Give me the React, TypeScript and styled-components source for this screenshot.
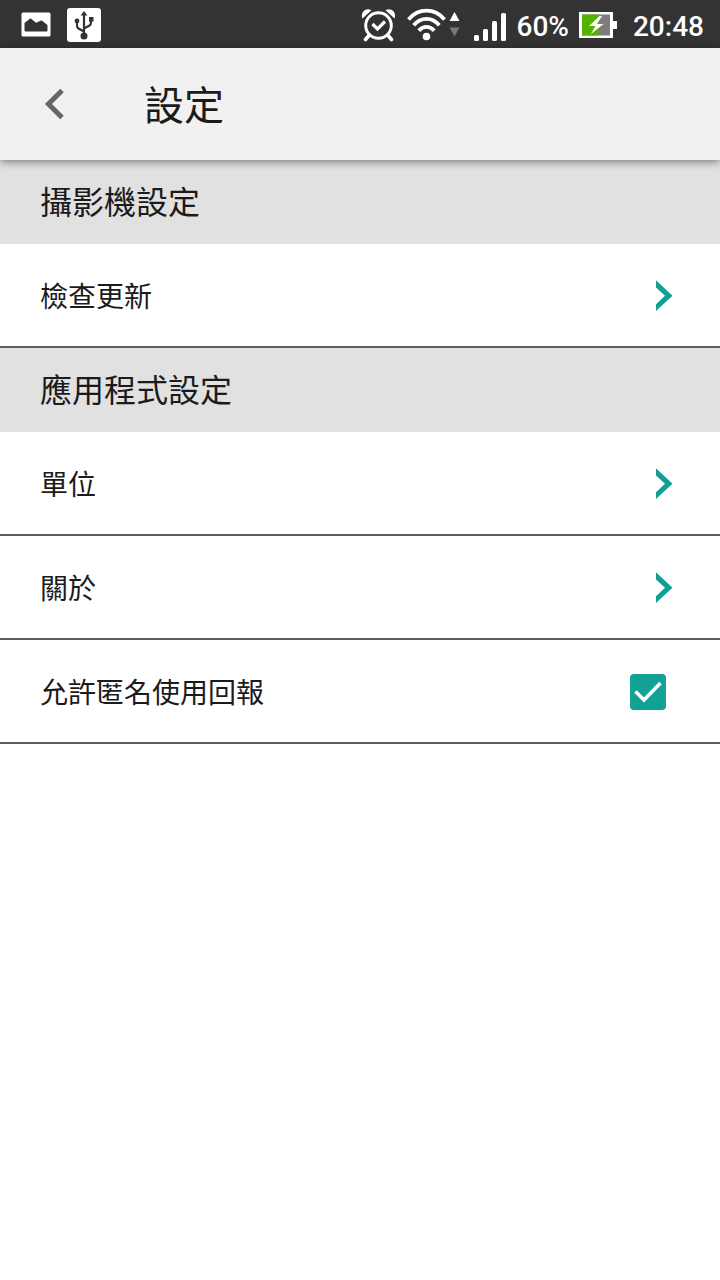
import React, { useState } from "react";
import styled, { createGlobalStyle } from "styled-components";

const GlobalStyle = createGlobalStyle`
  *, *::before, *::after { box-sizing: border-box; }
  body {
    margin: 0;
    background: #ffffff;
    color: #1b1b1b;
    font-family: "Noto Sans CJK TC", "Noto Sans", sans-serif;
  }
`;

const Screen = styled.div`
  display: flex;
  flex-direction: column;
  min-height: 100vh;
`;

const StatusBar = styled.div`
  display: flex;
  justify-content: space-between;
  align-items: center;
  height: 48px;
  padding: 2px 16px 0 21px;
  background: #333333;
  color: #ffffff;
  font-family: Roboto, sans-serif;
  font-size: 28px;
  font-weight: 500;
  line-height: 32px;
`;

const StatusGroup = styled.div<{ $gap: number }>`
  display: flex;
  align-items: center;
  gap: ${(p) => p.$gap}px;
`;

const StatusText = styled.span`
  padding-top: 4px;
`;

const ClockText = styled(StatusText)`
  padding-left: 6px;
`;

const Glyph = styled.svg`
  display: block;
  flex: none;
`;

const Header = styled.header`
  position: relative;
  z-index: 1;
  display: flex;
  align-items: center;
  gap: 36px;
  height: 112px;
  background: #f1f1f1;
  box-shadow: 0 2px 8px rgba(0, 0, 0, 0.45);
`;

const BackButton = styled.button`
  display: flex;
  align-items: center;
  justify-content: center;
  width: 108px;
  height: 112px;
  padding: 0;
  border: 0;
  background: none;
  cursor: pointer;
`;

const Title = styled.h1`
  margin: 0;
  padding-bottom: 2px;
  font-size: 40px;
  font-weight: 400;
  line-height: 60px;
`;

const SectionTitle = styled.h2`
  margin: 0;
  padding: 16px 40px 20px;
  background: #e1e1e1;
  font-size: 32px;
  font-weight: 400;
  line-height: 48px;
`;

const List = styled.ul`
  margin: 0;
  padding: 0;
  list-style: none;
`;

const Row = styled.li`
  border-bottom: 2px solid #5c5c5c;
`;

const RowButton = styled.button`
  display: flex;
  align-items: center;
  justify-content: space-between;
  width: 100%;
  padding: 30px 47px 30px 40px;
  border: 0;
  background: none;
  color: inherit;
  font: inherit;
  font-size: 28px;
  line-height: 42px;
  text-align: left;
  cursor: pointer;
`;

const RowLabel = styled.label`
  display: flex;
  align-items: center;
  justify-content: space-between;
  padding: 30px 54px 30px 40px;
  font-size: 28px;
  line-height: 42px;
  cursor: pointer;
`;

const CheckWrap = styled.span`
  display: grid;
  width: 36px;
  height: 36px;
  margin-top: 2px;

  & > * {
    grid-area: 1 / 1;
  }
`;

const CheckInput = styled.input`
  appearance: none;
  width: 36px;
  height: 36px;
  margin: 0;
  border: 3px solid #12a195;
  border-radius: 4px;
  background: #ffffff;
  cursor: pointer;

  &:checked {
    background: #12a195;
  }
`;

const CheckMark = styled(Glyph)`
  z-index: 1;
  pointer-events: none;
`;

const PictureIcon = () => (
  <Glyph width="30" height="34" viewBox="0 0 30 34" aria-hidden="true">
    <rect x="0.5" y="4.5" width="29" height="24" rx="1.5" fill="#fff" />
    <path d="M4.500 22.500V15.500L9.500 11.500L15 16L20.500 13.500L25.500 17.500V22.500z" fill="#333" stroke="#333" strokeWidth="2" strokeLinejoin="round" />
  </Glyph>
);

const UsbIcon = () => (
  <Glyph width="34" height="34" viewBox="0 0 34 34" aria-hidden="true">
    <rect width="34" height="34" rx="3" fill="#fff" />
    <g fill="none" stroke="#333" strokeWidth="2.200">
      <path d="M17 6v22" />
      <path d="M17 23.500L11.500 20.500Q10 19.500 10 17.500V13" />
      <path d="M17 20.500L22.500 17.500Q24 16.500 24 14.500V11" />
    </g>
    <path d="M17 3l3.500 4.500h-7z" fill="#333" />
    <circle cx="10" cy="13" r="2.400" fill="#333" />
    <rect x="22" y="9" width="4.500" height="4.500" fill="#333" />
    <circle cx="17" cy="28" r="3.500" fill="#333" />
  </Glyph>
);

const AlarmIcon = () => (
  <Glyph width="36" height="34" viewBox="0 0 36 34" aria-hidden="true">
    <g fill="none" stroke="#fff">
      <circle cx="17.500" cy="17.500" r="12.800" strokeWidth="3" />
      <path d="M11.500 16l5 5 7.500-7.500" strokeWidth="3.200" />
      <path d="M8 27.500L4.500 31.500M27 27.500l3.500 4" strokeWidth="3.600" strokeLinecap="round" />
    </g>
    <path d="M1.500 10.500C-1 5 4.500 -1 10.500 2.200zM33.500 10.500C36 5 30.500 -1 24.500 2.200z" fill="#fff" />
  </Glyph>
);

const WifiIcon = () => (
  <Glyph width="57" height="34" viewBox="0 0 57 34" aria-hidden="true">
    <g fill="none" stroke="#fff" strokeWidth="3.800">
      <path d="M1.500 11.500Q9 2.700 19.500 2.700T37.500 11.500" />
      <path d="M6.700 17.300Q12 10.900 19.500 10.900T32.300 17.300" />
      <path d="M11.800 22.700Q15 18.800 19.500 18.800T27.200 22.700" />
    </g>
    <circle cx="19.500" cy="28.500" r="3.800" fill="#fff" />
    <path d="M47.500 4l5 9h-10z" fill="#fff" />
    <path d="M47.500 28.500l5-9h-10z" fill="#777" />
  </Glyph>
);

const SignalIcon = () => (
  <Glyph width="33" height="34" viewBox="0 0 33 34" fill="#fff" aria-hidden="true">
    <rect x="0" y="27" width="5" height="6" rx="1.500" />
    <rect x="9" y="21" width="5" height="12" rx="1.500" />
    <rect x="18" y="13" width="5" height="20" rx="1.500" />
    <rect x="27" y="5" width="5" height="28" rx="1.500" />
  </Glyph>
);

const BatteryIcon = () => (
  <Glyph width="38" height="34" viewBox="0 0 38 34" aria-hidden="true">
    <path d="M0 4h34v9h4v8h-4v9H0z" fill="#fff" />
    <rect x="3" y="6.500" width="28" height="21" fill="#7d7d7d" />
    <rect x="3" y="6.500" width="16.500" height="21" fill="#55b300" />
    <path d="M20.500 8L10 18h6.500L12 26l12.500-10H18l5-8z" fill="#fff" />
  </Glyph>
);

const ChevronIcon = () => (
  <Glyph width="17" height="32" viewBox="0 0 17 32" aria-hidden="true">
    <path d="M0 1.200L16.500 16.800 0 32V25.200L9 16.800 0 8.500z" fill="#159f94" />
  </Glyph>
);

const NavRow = ({ children }: { children: React.ReactNode }) => (
  <Row>
    <RowButton type="button">
      {children}
      <ChevronIcon />
    </RowButton>
  </Row>
);

export default function App() {
  const [reporting, setReporting] = useState(true);

  return (
    <Screen>
      <GlobalStyle />
      <StatusBar>
        <StatusGroup $gap={16}>
          <PictureIcon />
          <UsbIcon />
        </StatusGroup>
        <StatusGroup $gap={10}>
          <AlarmIcon />
          <WifiIcon />
          <SignalIcon />
          <StatusText>60%</StatusText>
          <BatteryIcon />
          <ClockText>20:48</ClockText>
        </StatusGroup>
      </StatusBar>
      <Header>
        <BackButton type="button" aria-label="返回">
          <Glyph width="20" height="32" viewBox="0 0 20 32" aria-hidden="true">
            <path d="M18 2.500L4.500 16 18 29.500" fill="none" stroke="#666" strokeWidth="5" />
          </Glyph>
        </BackButton>
        <Title>設定</Title>
      </Header>
      <main>
        <SectionTitle>攝影機設定</SectionTitle>
        <List>
          <NavRow>檢查更新</NavRow>
        </List>
        <SectionTitle>應用程式設定</SectionTitle>
        <List>
          <NavRow>單位</NavRow>
          <NavRow>關於</NavRow>
          <Row>
            <RowLabel>
              允許匿名使用回報
              <CheckWrap>
                <CheckInput
                  type="checkbox"
                  checked={reporting}
                  onChange={(e) => setReporting(e.target.checked)}
                />
                {reporting && (
                  <CheckMark width="36" height="36" viewBox="0 0 36 36" aria-hidden="true">
                    <path d="M5.500 17.500L14 26 30.500 9" fill="none" stroke="#fff" strokeWidth="3.600" />
                  </CheckMark>
                )}
              </CheckWrap>
            </RowLabel>
          </Row>
        </List>
      </main>
    </Screen>
  );
}
